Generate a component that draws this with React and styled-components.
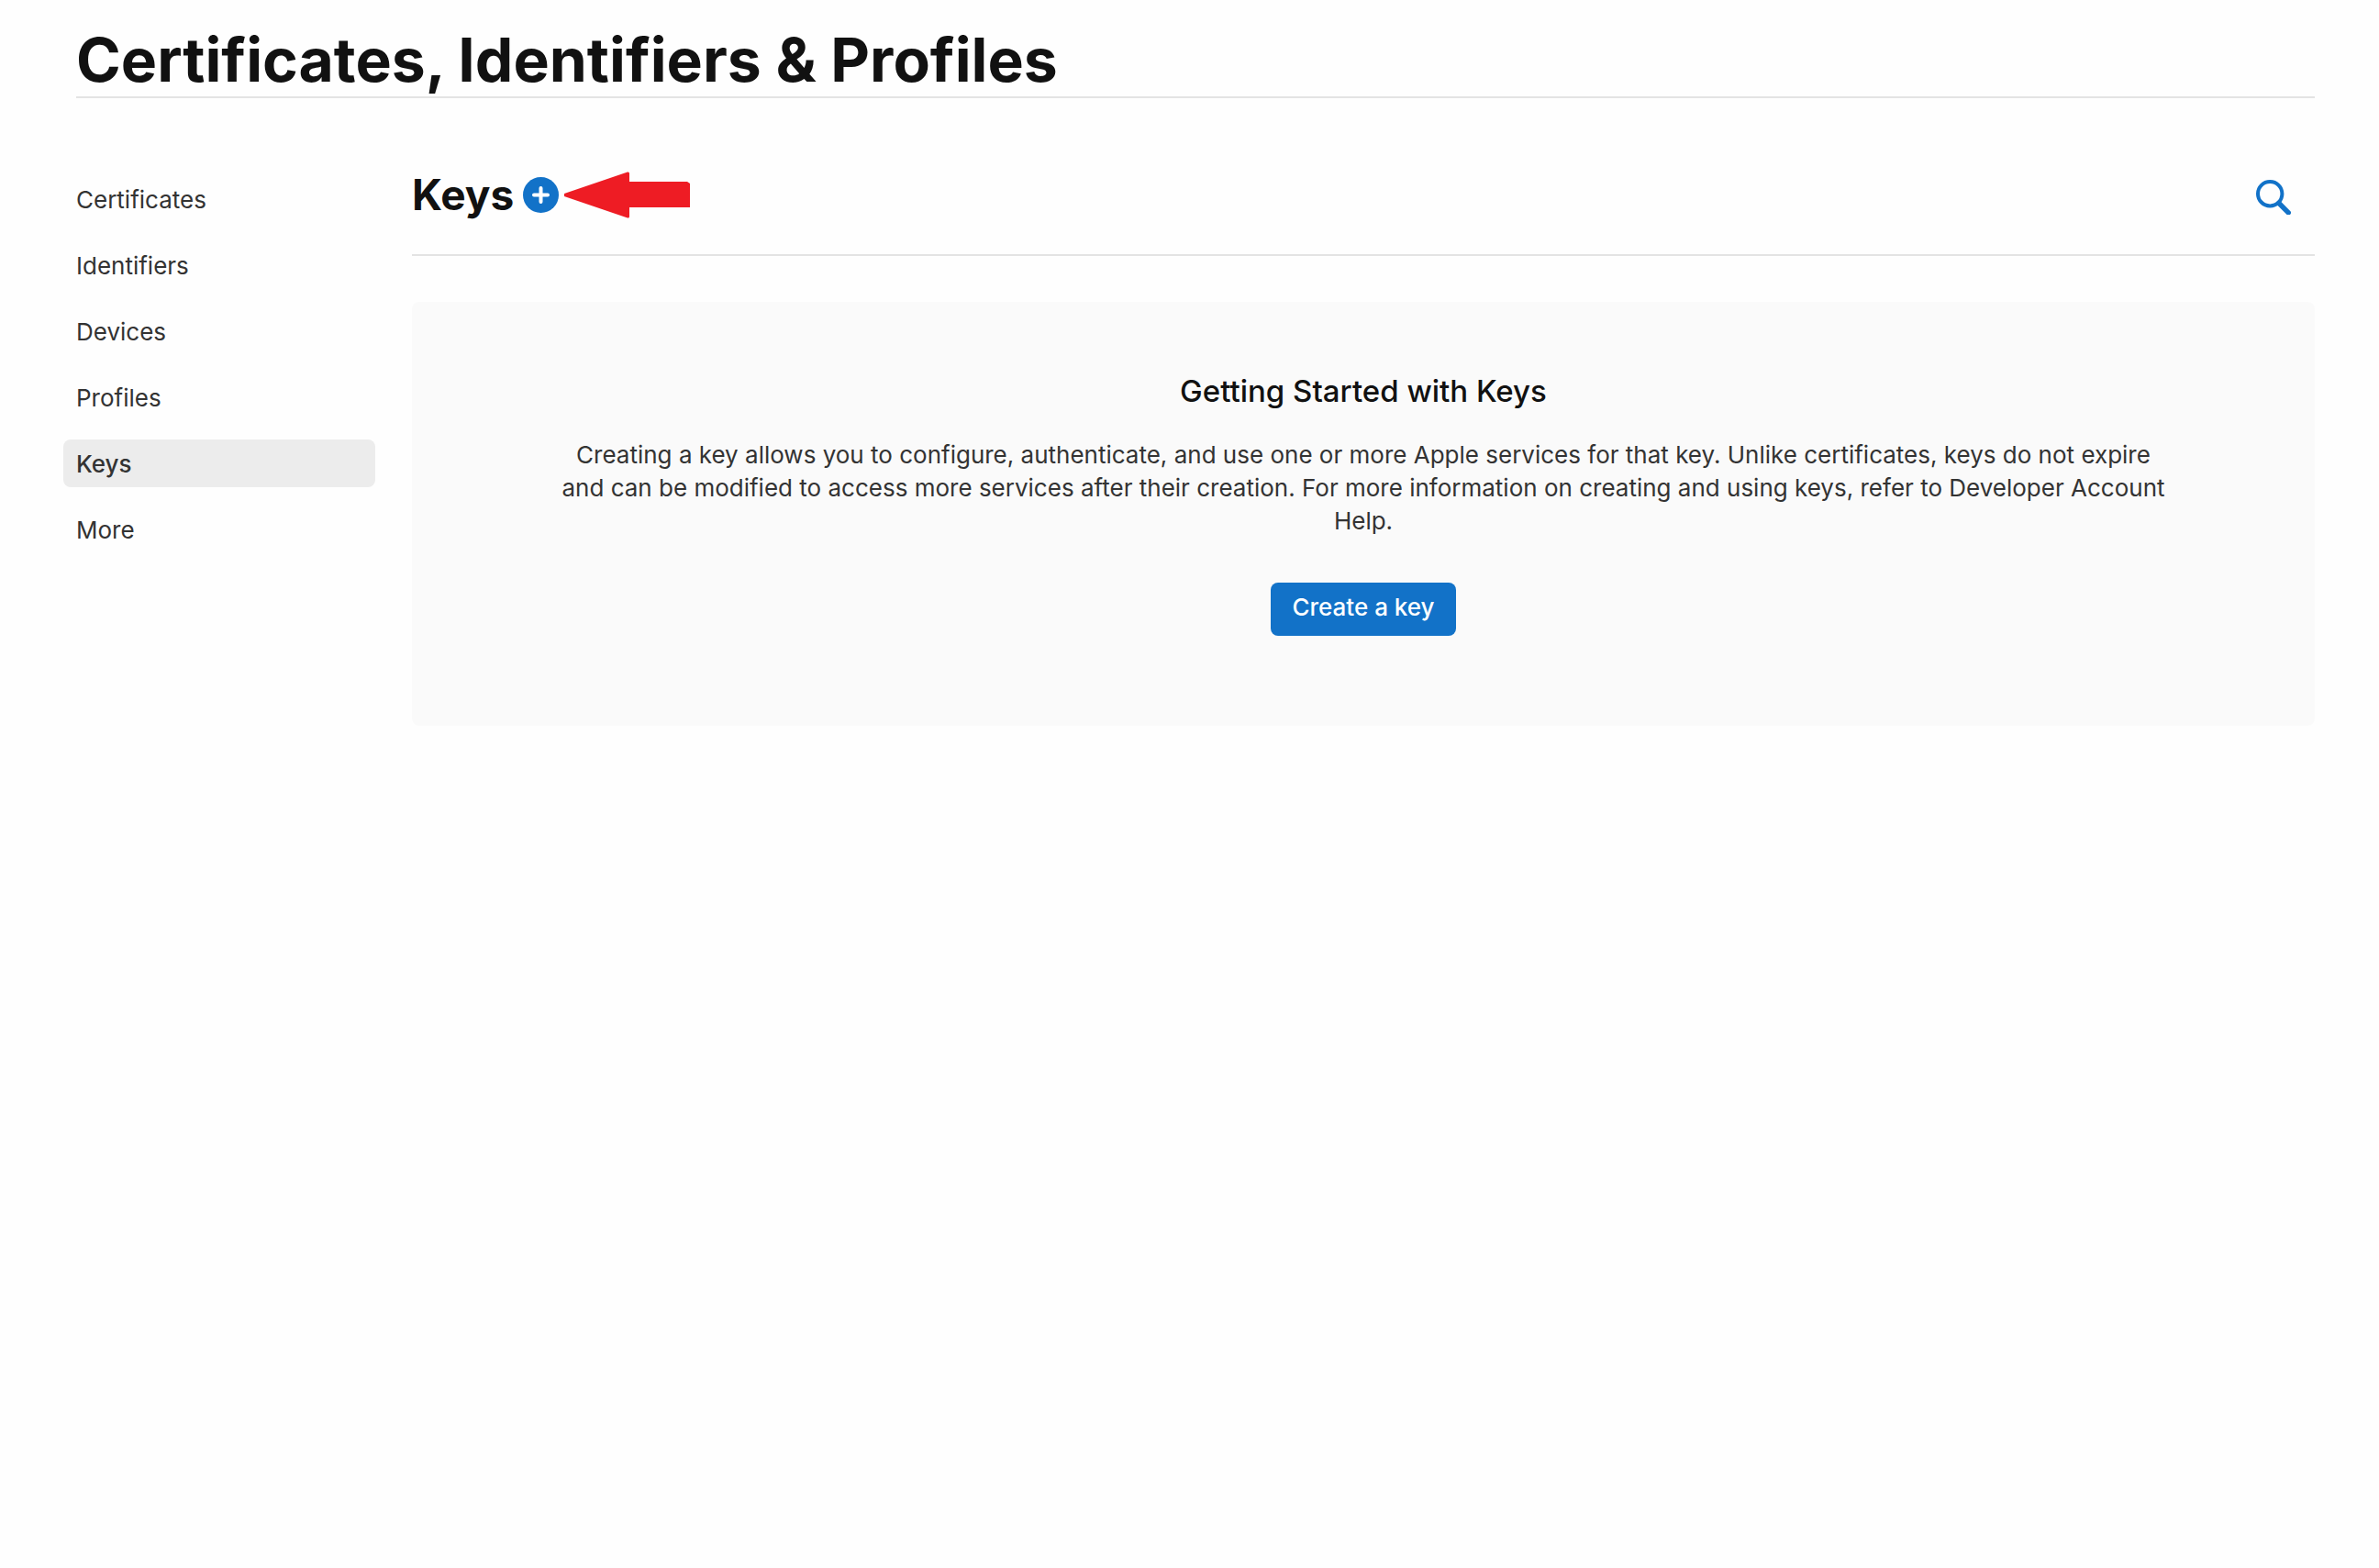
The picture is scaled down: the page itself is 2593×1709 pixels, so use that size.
import React from "react";
import styled, { createGlobalStyle } from "styled-components";

const GlobalStyle = createGlobalStyle`
  *, *::before, *::after { box-sizing: border-box; }
  body {
    margin: 0;
    background: #fefefe;
    color: #333333;
    font-family: Inter, "Liberation Sans", sans-serif;
    font-size: 26px;
    line-height: 36px;
  }
  h1, h2, h3, p, ul { margin: 0; padding: 0; }
`;

const Page = styled.div`
  padding: 25px 70px 70px 69px;
`;

const PageHeader = styled.header`
  margin-left: 14px;
  border-bottom: 2px solid #e3e3e3;
`;

const PageTitle = styled.h1`
  color: #111111;
  font-size: 66px;
  font-weight: 700;
  line-height: 80px;
`;

const Body = styled.div`
  display: flex;
  align-items: flex-start;
  gap: 40px;
  padding-top: 75px;
`;

const SideNav = styled.nav`
  flex: 0 0 340px;
  padding-top: 9px;
`;

const NavList = styled.ul`
  display: flex;
  flex-direction: column;
  gap: 20px;
  list-style: none;
`;

const NavLink = styled.a`
  display: block;
  padding: 9px 14px 7px;
  border-radius: 8px;
  background: ${({ $active }) => ($active ? "#ececec" : "transparent")};
  color: #333333;
  font-weight: ${({ $active }) => ($active ? 500 : 400)};
  text-decoration: none;
`;

const Main = styled.main`
  flex: 1;
  min-width: 0;
`;

const SectionHeader = styled.div`
  display: flex;
  align-items: center;
  padding: 0 26px 35px 0;
  border-bottom: 2px solid #e3e3e3;
`;

const SectionTitle = styled.h2`
  color: #111111;
  font-size: 46px;
  font-weight: 700;
  line-height: 60px;
`;

const IconButton = styled.button`
  display: flex;
  padding: 0;
  border: 0;
  background: none;
  color: #1272c8;
  cursor: pointer;
`;

const AddButton = styled(IconButton)`
  margin: 0 6px 0 10px;
`;

const SearchButton = styled(IconButton)`
  margin-left: auto;
  padding-top: 6px;
`;

const Panel = styled.section`
  display: flex;
  flex-direction: column;
  align-items: center;
  margin-top: 50px;
  padding: 73px 158px 98px;
  border-radius: 8px;
  background: #fafafa;
  text-align: center;
`;

const PanelTitle = styled.h3`
  color: #111111;
  font-size: 33px;
  font-weight: 500;
  line-height: 48px;
`;

const PanelText = styled.p`
  margin: 28px 0 49px;
`;

const PrimaryButton = styled.button`
  padding: 9px 23px 13px;
  border: 0;
  border-radius: 8px;
  background: #1272c8;
  color: #ffffff;
  font: inherit;
  font-weight: 500;
  cursor: pointer;
`;

const PlusIcon = () => (
  <svg width="39" height="39" viewBox="0 0 39 39" aria-hidden="true">
    <circle cx="19.5" cy="19.5" r="19.5" fill="currentColor" />
    <path d="M19.5 12v15M12 19.5h15" stroke="#fff" strokeWidth="4" strokeLinecap="round" />
  </svg>
);

const ArrowIcon = () => (
  <svg width="137" height="51" viewBox="0 0 137 51" aria-hidden="true">
    <path d="M0 24 69 0.500Q71 0 71 2V11H134L137 13V39H71V49Q71 51 69 50.500L0 27Z" fill="#ee1c24" />
  </svg>
);

const SearchIcon = () => (
  <svg width="38" height="38" viewBox="0 0 38 38" fill="none" stroke="currentColor" aria-hidden="true">
    <circle cx="15.200" cy="15.200" r="13.200" strokeWidth="4" />
    <path d="M25 25.500 35.300 35.800" strokeWidth="5.400" strokeLinecap="round" />
  </svg>
);

const navItems = ["Certificates", "Identifiers", "Devices", "Profiles", "Keys", "More"];
const current = "Keys";

export default function App() {
  return (
    <>
      <GlobalStyle />
      <Page>
        <PageHeader>
          <PageTitle>Certificates, Identifiers &amp; Profiles</PageTitle>
        </PageHeader>
        <Body>
          <SideNav aria-label="Resources">
            <NavList>
              {navItems.map((item) => (
                <li key={item}>
                  <NavLink
                    href={`#${item.toLowerCase()}`}
                    $active={item === current}
                    aria-current={item === current ? "page" : undefined}
                  >
                    {item}
                  </NavLink>
                </li>
              ))}
            </NavList>
          </SideNav>
          <Main>
            <SectionHeader>
              <SectionTitle>Keys</SectionTitle>
              <AddButton type="button" aria-label="Add key">
                <PlusIcon />
              </AddButton>
              <ArrowIcon />
              <SearchButton type="button" aria-label="Search">
                <SearchIcon />
              </SearchButton>
            </SectionHeader>
            <Panel>
              <PanelTitle>Getting Started with Keys</PanelTitle>
              <PanelText>
                Creating a key allows you to configure, authenticate, and use one or more Apple
                services for that key. Unlike certificates, keys do not expire and can be modified
                to access more services after their creation. For more information on creating and
                using keys, refer to Developer Account Help.
              </PanelText>
              <PrimaryButton type="button">Create a key</PrimaryButton>
            </Panel>
          </Main>
        </Body>
      </Page>
    </>
  );
}
